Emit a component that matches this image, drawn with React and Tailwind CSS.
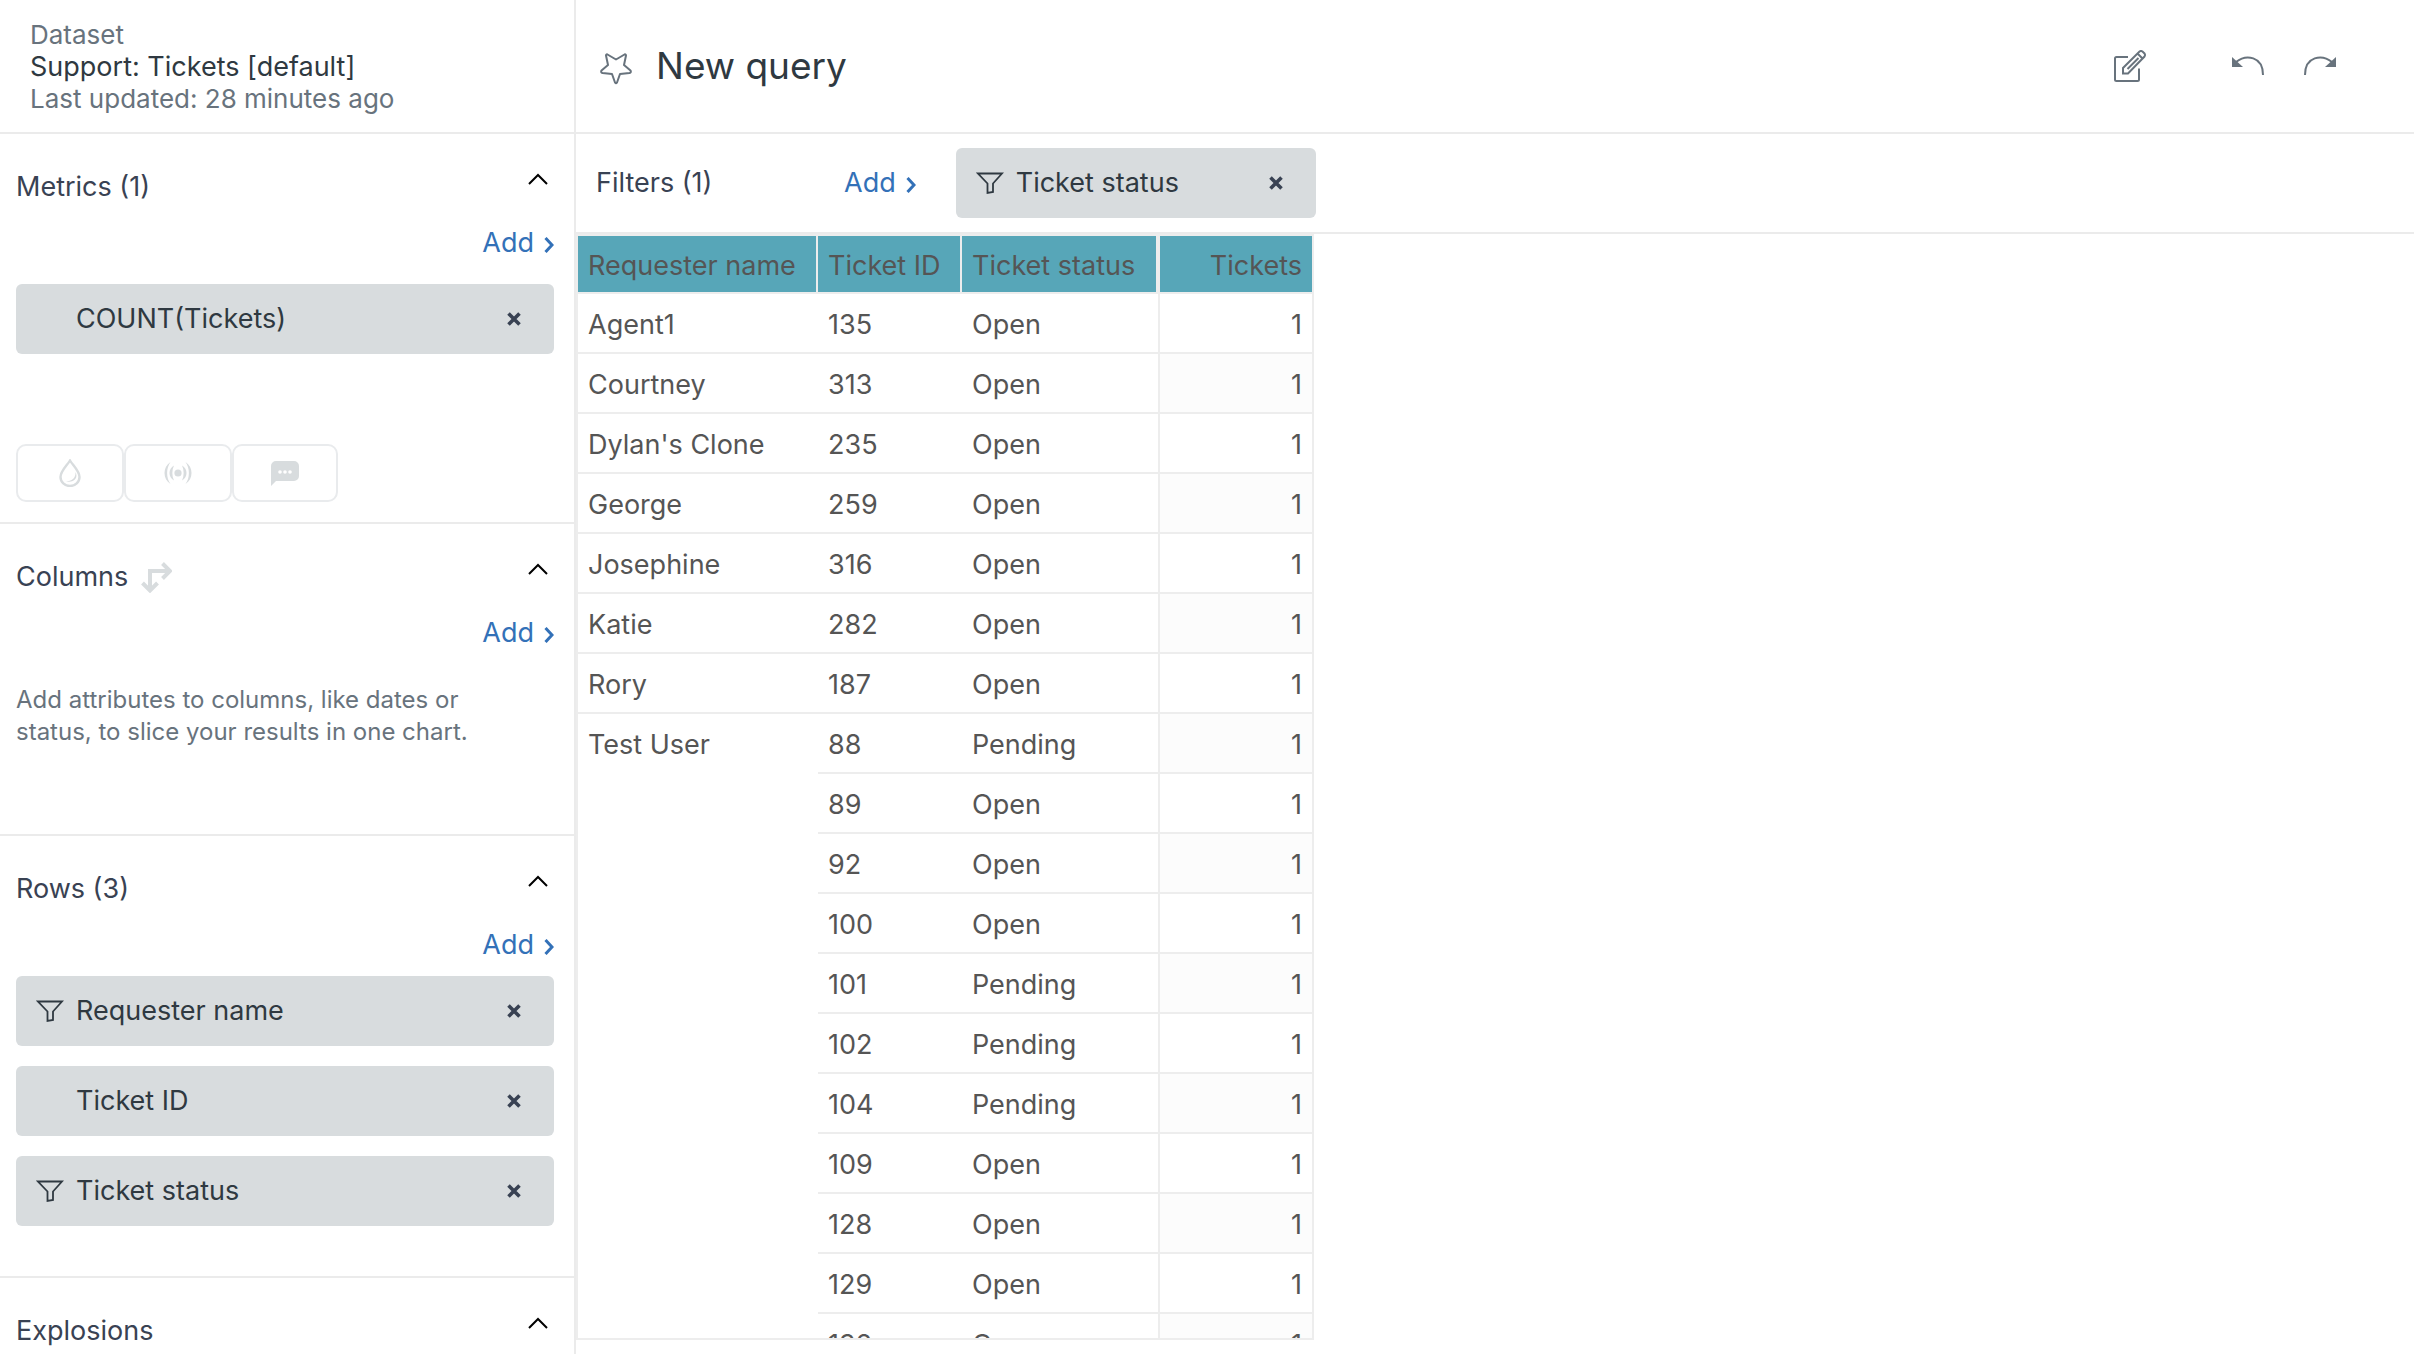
const rows = [
  { name: "Agent1", id: 135, status: "Open" },
  { name: "Courtney", id: 313, status: "Open" },
  { name: "Dylan's Clone", id: 235, status: "Open" },
  { name: "George", id: 259, status: "Open" },
  { name: "Josephine", id: 316, status: "Open" },
  { name: "Katie", id: 282, status: "Open" },
  { name: "Rory", id: 187, status: "Open" },
  { name: "Test User", id: 88, status: "Pending", span: 11 },
  { id: 89, status: "Open" },
  { id: 92, status: "Open" },
  { id: 100, status: "Open" },
  { id: 101, status: "Pending" },
  { id: 102, status: "Pending" },
  { id: 104, status: "Pending" },
  { id: 109, status: "Open" },
  { id: 128, status: "Open" },
  { id: 129, status: "Open" },
  { id: 132, status: "Open" },
];

function Funnel() {
  return (
    <svg viewBox="0 0 28 24" className="h-6 w-7" fill="none" stroke="currentColor" strokeWidth="1.8" aria-hidden="true">
      <path d="M2 2.500H26L17 12.500V21L11.500 22V12.500Z" />
    </svg>
  );
}

function Cross() {
  return (
    <svg viewBox="0 0 14 14" className="h-3.5 w-3.5" fill="none" stroke="currentColor" strokeWidth="3.6" aria-hidden="true">
      <path d="M1.500 1.500L12.500 12.500M12.500 1.500L1.500 12.500" />
    </svg>
  );
}

function Chip({ label, filtered }) {
  return (
    <div className="flex h-[70px] items-center rounded-md bg-[#d8dcde] pr-[33px] pl-5 text-[#2f3941]">
      <span className="w-10 shrink-0">{filtered && <Funnel />}</span>
      <span className="flex-1 truncate">{label}</span>
      <button type="button" aria-label={`Remove ${label}`} className="text-[#394253]">
        <Cross />
      </button>
    </div>
  );
}

function AddButton() {
  return (
    <button type="button" className="flex items-center gap-2.5 leading-9 text-[#3371b8]">
      Add
      <svg viewBox="0 0 10 16" className="mt-1 h-4 w-2.5" fill="none" stroke="currentColor" strokeWidth="3" aria-hidden="true">
        <path d="M1.500 1L8 8L1.500 15" />
      </svg>
    </button>
  );
}

function Section({ title, icon, className = "", children }) {
  return (
    <section className={`pt-[35px] pr-5 pl-4 ${className}`}>
      <div className="flex items-start justify-between">
        <h2 className="flex items-center gap-3 leading-9 text-[#394253]">
          {title}
          {icon}
        </h2>
        <button type="button" aria-label={`Collapse ${title}`} className="mr-1.5 flex h-5 items-center text-black">
          <svg viewBox="0 0 20 12" className="h-3 w-5" fill="none" stroke="currentColor" strokeWidth="2" aria-hidden="true">
            <path d="M1 11L10 2L19 11" />
          </svg>
        </button>
      </div>
      {children}
    </section>
  );
}

function AddRow() {
  return (
    <div className="flex justify-end pt-5">
      <AddButton />
    </div>
  );
}

function ToolButton({ label, children }) {
  return (
    <button
      type="button"
      aria-label={label}
      className="flex h-[58px] w-[108px] items-center justify-center rounded-[10px] border-2 border-[#e9ebed] text-[#d8dcde] last:w-[106px]"
    >
      {children}
    </button>
  );
}

function Sidebar() {
  return (
    <aside className="flex w-[576px] shrink-0 flex-col border-r-2 border-[#ebebeb]">
      <div className="h-[134px] shrink-0 border-b-2 border-[#ebebeb] pt-[19px] pl-[30px] leading-8">
        <p className="text-[26px] text-[#68737d]">Dataset</p>
        <p className="text-[#2f3941]">Support: Tickets [default]</p>
        <p className="text-[26px] text-[#68737d]">Last updated: 28 minutes ago</p>
      </div>

      <Section title="Metrics (1)" className="border-b-2 border-[#ebebeb] pb-5">
        <AddRow />
        <div className="pt-[23px]">
          <Chip label="COUNT(Tickets)" />
        </div>
        <div className="flex pt-[90px]">
          <ToolButton label="Result manipulation">
            <svg viewBox="0 0 22 28" className="h-7 w-[22px]" aria-hidden="true">
              <path d="M11 1.500C14 6.500 20.500 12 20.500 18A9.500 9 0 0 1 1.500 18C1.500 12 8 6.500 11 1.500Z" fill="none" stroke="currentColor" strokeWidth="2.400" />
              <path d="M16.500 13C19.500 19 15 24 7 22.500C12.500 22.500 17 19 16.500 13Z" fill="currentColor" />
            </svg>
          </ToolButton>
          <ToolButton label="Live data">
            <svg viewBox="0 0 28 24" className="h-6 w-7" fill="currentColor" aria-hidden="true">
              <circle cx="14" cy="12" r="3.600" />
              <path d="M6.500 1C-1.500 6-1.500 18 6.500 23C2 17 2 7 6.500 1Z" />
              <path d="M21.500 1C29.500 6 29.500 18 21.500 23C26 17 26 7 21.500 1Z" />
              <path d="M10 4.500C4 8 4 16 10 19.500C7.800 15 7.800 9 10 4.500Z" />
              <path d="M18 4.500C24 8 24 16 18 19.500C20.200 15 20.200 9 18 4.500Z" />
            </svg>
          </ToolButton>
          <ToolButton label="Comments">
            <svg viewBox="0 0 28 25" className="h-[25px] w-7" aria-hidden="true">
              <path d="M5 0H23A5 5 0 0 1 28 5V15A5 5 0 0 1 23 20H5L0 25V5A5 5 0 0 1 5 0Z" fill="currentColor" />
              <g fill="#fff">
                <circle cx="9" cy="11" r="1.800" />
                <circle cx="14" cy="11" r="1.800" />
                <circle cx="19" cy="11" r="1.800" />
              </g>
            </svg>
          </ToolButton>
        </div>
      </Section>

      <Section
        title="Columns"
        className="border-b-2 border-[#ebebeb] pb-[86px]"
        icon={
          <svg viewBox="0 0 32 32" className="h-8 w-8" fill="none" stroke="#d8dcde" strokeWidth="4" aria-hidden="true">
            <path d="M10 29V10H29M2.500 22L10 29.500L17.500 22M22.500 2.500L30 10L22.500 17.500" />
          </svg>
        }
      >
        <AddRow />
        <p className="max-w-[480px] pt-[33px] text-2xl leading-8 text-[#68737d]">
          Add attributes to columns, like dates or status, to slice your results in one chart.
        </p>
      </Section>

      <Section title="Rows (3)" className="border-b-2 border-[#ebebeb] pb-[50px]">
        <AddRow />
        <div className="flex flex-col gap-5 pt-[13px]">
          <Chip label="Requester name" filtered />
          <Chip label="Ticket ID" />
          <Chip label="Ticket status" filtered />
        </div>
      </Section>

      <Section title="Explosions" />
    </aside>
  );
}

function Header() {
  return (
    <header className="flex h-[134px] shrink-0 items-center border-b-2 border-[#ebebeb] pr-[78px] pl-6 text-[#68737d]">
      <button type="button" aria-label="Add to favorites" className="pt-1.5">
        <svg viewBox="0 0 32 32" className="h-8 w-8" fill="none" stroke="currentColor" strokeWidth="2" strokeLinejoin="round" aria-hidden="true">
          <path d="M16 6.500L24.500 1.500Q26 1 26 2.500L24 12L30.500 17.500Q31.500 19.500 29.500 20L20 21L17 29.500Q16 31 15 29.500L12 21L2.500 20Q.500 19.500 1.500 17.500L8 12L6 2.500Q6 1 7.500 1.500Z" />
        </svg>
      </button>
      <h1 className="flex-1 pl-6 text-[37px] leading-12 text-[#2f3941]">New query</h1>
      <button type="button" aria-label="Edit">
        <svg viewBox="0 0 32 32" className="h-8 w-8" fill="none" stroke="currentColor" strokeWidth="2" aria-hidden="true">
          <path d="M14 7H2.500Q1 7 1 8.500V29.500Q1 31 2.500 31H23.500Q25 31 25 29.500V18.500" />
          <path d="M9 23.500V18L25.500 1.500Q27 .500 28.500 1.500L30.500 3.500Q31.500 5 30.500 6.500L14 23.500ZM24 4L28.500 8.500M13.500 19L24.500 8" />
        </svg>
      </button>
      <button type="button" aria-label="Undo" className="pl-[86px]">
        <svg viewBox="0 0 32 20" className="h-5 w-8" aria-hidden="true">
          <path d="M4 6C14-2 31 0 31 19" fill="none" stroke="currentColor" strokeWidth="2" />
          <path d="M0 1V11H11Z" fill="currentColor" />
        </svg>
      </button>
      <button type="button" aria-label="Redo" className="pl-10">
        <svg viewBox="0 0 32 20" className="h-5 w-8" aria-hidden="true">
          <path d="M28 6C18-2 1 0 1 19" fill="none" stroke="currentColor" strokeWidth="2" />
          <path d="M32 1V11H21Z" fill="currentColor" />
        </svg>
      </button>
    </header>
  );
}

function Results() {
  const head = "border-b-2 border-[#ededed] px-2.5 pt-1 font-normal";
  const cell = "h-[60px] border-b-2 border-[#ededed] px-2.5 pt-[3px] text-left";
  return (
    <div className="min-h-0 flex-1 self-start overflow-hidden border-2 border-[#ededed]">
      <table className="table-fixed border-separate border-spacing-0 leading-9 text-[#555]">
        <colgroup>
          <col className="w-[240px]" />
          <col className="w-[144px]" />
          <col className="w-[198px]" />
          <col className="w-[152px]" />
        </colgroup>
        <thead>
          <tr className="bg-[#57a6b8]">
            <th scope="col" className={`${head} h-[58px] border-r-2 text-left`}>Requester name</th>
            <th scope="col" className={`${head} border-r-2 text-left`}>Ticket ID</th>
            <th scope="col" className={`${head} border-r-4 text-left`}>Ticket status</th>
            <th scope="col" className={`${head} text-right`}>Tickets</th>
          </tr>
        </thead>
        <tbody>
          {rows.map((row, i) => (
            <tr key={row.id}>
              {row.name && (
                <td rowSpan={row.span} className={`${cell} align-top`}>
                  <div className="pt-2.5">{row.name}</div>
                </td>
              )}
              <td className={cell}>{row.id}</td>
              <td className={`${cell} border-r-2`}>{row.status}</td>
              <td className={`h-[60px] border-b-2 border-[#ededed] px-2.5 pt-[3px] text-right ${i % 2 ? "bg-[#fcfcfc]" : ""}`}>1</td>
            </tr>
          ))}
        </tbody>
      </table>
    </div>
  );
}

export default function App() {
  return (
    <div className="flex h-screen overflow-hidden bg-white font-['Inter',sans-serif] text-[27px]">
      <Sidebar />
      <main className="flex min-w-0 flex-1 flex-col pb-3.5">
        <Header />
        <div className="flex h-[100px] shrink-0 items-center border-b-2 border-[#ebebeb] pl-5 text-[#394253]">
          <h2 className="w-[248px]">Filters (1)</h2>
          <AddButton />
          <div className="w-[400px] pl-10">
            <Chip label="Ticket status" filtered />
          </div>
        </div>
        <Results />
      </main>
    </div>
  );
}
